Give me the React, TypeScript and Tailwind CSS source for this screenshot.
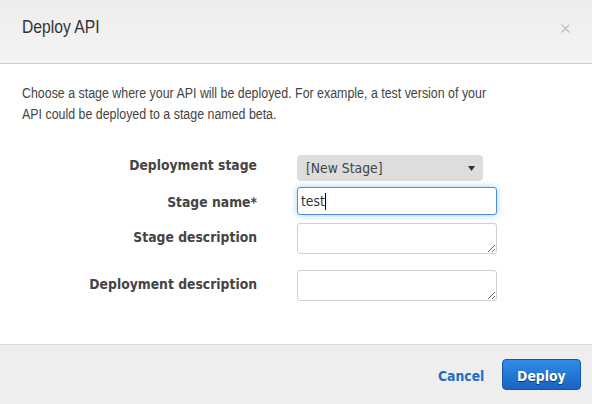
import React from "react";

const sans = "font-['Liberation_Sans',Arial,sans-serif]";
const deja = "font-['DejaVu_Sans',Verdana,sans-serif]";

function FormRow({
  label,
  labelPad,
  className,
  children,
}: {
  label: string;
  labelPad: string;
  className?: string;
  children: React.ReactNode;
}) {
  return (
    <div className={["flex items-start", className ?? ""].join(" ")}>
      <div
        className={[
          "w-[257px] shrink-0 origin-right scale-x-[0.886] text-right text-[14px] font-bold leading-[20px] text-[#444]",
          deja,
          labelPad,
        ].join(" ")}
      >
        {label}
      </div>
      <div className="ml-[40px]">{children}</div>
    </div>
  );
}

export default function App() {
  return (
    <div className="flex h-[404px] w-[592px] flex-col overflow-hidden bg-white">
      {/* Header */}
      <div className="flex h-[64px] shrink-0 items-start justify-between border-b border-[#cdcdcd] bg-gradient-to-b from-[#ededed] to-[#f4f4f4] px-[22px] pt-[17px]">
        <h1
          className={[
            "origin-left scale-x-[0.886] text-[17.7px] font-normal leading-[20px] text-[#333]",
            sans,
          ].join(" ")}
        >
          Deploy API
        </h1>
        <button type="button" className="mt-[7px] h-[9px] w-[9px]" aria-label="Close">
          <svg width="9" height="9" viewBox="0 0 9 9">
            <path d="M1 1 L8 8 M8 1 L1 8" stroke="#c4c4c4" strokeWidth="1.6" strokeLinecap="round" />
          </svg>
        </button>
      </div>

      {/* Body */}
      <div className="h-[280px] shrink-0 pt-[19px]">
        <div className="px-[22px]">
          <p
            className={[
              "origin-left scale-x-[0.886] whitespace-nowrap text-[14px] leading-[21px] text-[#444]",
              sans,
            ].join(" ")}
          >
            Choose a stage where your API will be deployed. For example, a test version of your
            <br />
            API could be deployed to a stage named beta.
          </p>
        </div>

        <div className="mt-[30px] flex flex-col">
          <FormRow label="Deployment stage" labelPad="pt-0">
            <div className="flex h-[26px] w-[186px] items-center justify-between rounded-[4px] bg-[#dddddd] pl-[9px] pr-[8px]">
              <span
                className={["origin-left scale-x-[0.886] text-[14px] text-[#444]", deja].join(" ")}
              >
                [New Stage]
              </span>
              <svg width="7" height="5" viewBox="0 0 7 5">
                <path d="M0 0 H7 L3.5 5 Z" fill="#333" />
              </svg>
            </div>
          </FormRow>

          <FormRow label="Stage name*" labelPad="pt-[4.5px]" className="mt-[6px]">
            <div className="flex h-[28px] w-[200px] items-center rounded-[3px] border border-[#4a90e2] bg-white pl-[3px] shadow-[0_0_6px_rgba(102,175,233,0.6)]">
              <span className={["origin-left scale-x-[0.886] text-[14px] text-[#333]", deja].join(" ")}>
                test
              </span>
              <span className="-ml-[3px] h-[17px] w-[1px] bg-black" />
            </div>
          </FormRow>

          <FormRow label="Stage description" labelPad="pt-[4px]" className="mt-[8px]">
            <textarea className="block h-[31px] w-[200px] rounded-[3px] border border-[#d0d0d0] bg-white outline-none" />
          </FormRow>

          <FormRow label="Deployment description" labelPad="pt-[4px]" className="mt-[16px]">
            <textarea className="block h-[31px] w-[200px] rounded-[3px] border border-[#d0d0d0] bg-white outline-none" />
          </FormRow>
        </div>
      </div>

      {/* Footer */}
      <div className="flex flex-1 items-center justify-end border-t border-[#dcdcdc] bg-[#eeeeee] pr-[11px]">
        <button type="button" className="w-[47px] text-center">
          <span
            className={["inline-block scale-x-[0.886] text-[14px] font-bold text-[#1f6cc2]", deja].join(" ")}
          >
            Cancel
          </span>
        </button>
        <button
          type="button"
          className="ml-[20px] h-[31px] w-[79px] rounded-[4px] border border-[#1756a6] bg-gradient-to-b from-[#2f8de8] to-[#1a63c3]"
        >
          <span
            className={[
              "inline-block scale-x-[0.886] text-[14px] font-bold text-white [text-shadow:0_1px_1px_rgba(0,0,0,0.55)]",
              deja,
            ].join(" ")}
          >
            Deploy
          </span>
        </button>
      </div>
    </div>
  );
}
